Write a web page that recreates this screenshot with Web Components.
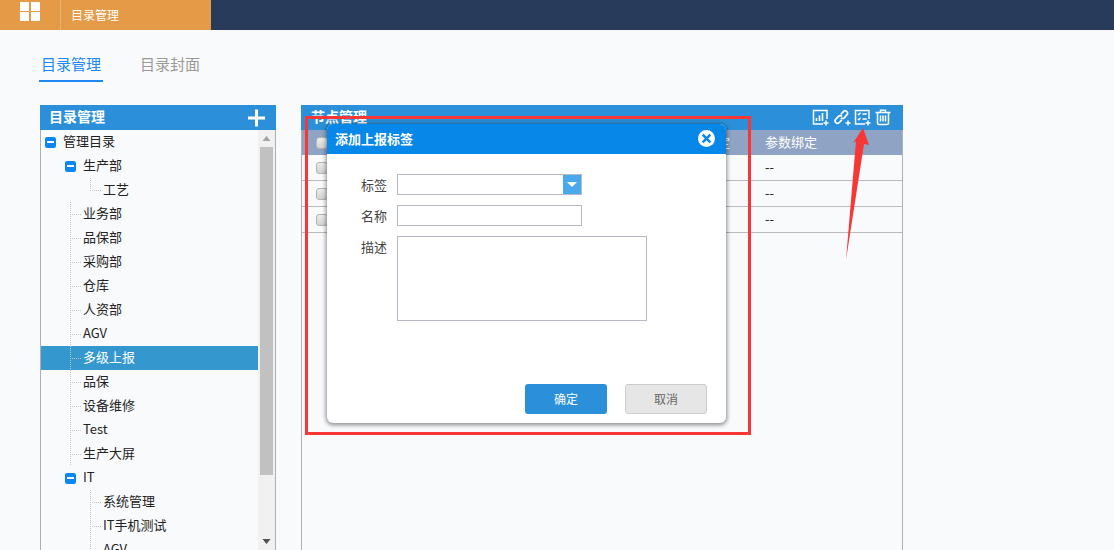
<!DOCTYPE html>
<html lang="zh">
<head>
<meta charset="utf-8">
<title>目录管理</title>
<style>
    html, body {
        margin: 0;
        height: 550px;
        overflow: hidden;
        background: #f9fafc;
        font: 13px "Noto Sans CJK SC", "Noto Sans", sans-serif;
        color: #222;
    }
    .workspace {
        display: flex;
        gap: 25px;
        margin: 23px 0 0 40px;
    }
</style>
</head>
<body>
<app-topbar>目录管理</app-topbar>
<tab-bar>
    <tab-item active>目录管理</tab-item>
    <tab-item>目录封面</tab-item>
</tab-bar>
<div class="workspace">
    <tree-panel>
        <tree-node level="0" toggle>管理目录</tree-node>
        <tree-node level="1" toggle>生产部</tree-node>
        <tree-node level="2" last>工艺</tree-node>
        <tree-node level="1">业务部</tree-node>
        <tree-node level="1">品保部</tree-node>
        <tree-node level="1">采购部</tree-node>
        <tree-node level="1">仓库</tree-node>
        <tree-node level="1">人资部</tree-node>
        <tree-node level="1">AGV</tree-node>
        <tree-node level="1" selected>多级上报</tree-node>
        <tree-node level="1">品保</tree-node>
        <tree-node level="1">设备维修</tree-node>
        <tree-node level="1">Test</tree-node>
        <tree-node level="1">生产大屏</tree-node>
        <tree-node level="1" toggle>IT</tree-node>
        <tree-node level="2">系统管理</tree-node>
        <tree-node level="2">IT手机测试</tree-node>
        <tree-node level="2">AGV</tree-node>
    </tree-panel>
    <node-panel></node-panel>
</div>
<tag-dialog></tag-dialog>
<red-markup></red-markup>

<script>
class AppTopbar extends HTMLElement {
    connectedCallback() {
        this.attachShadow({ mode: 'open' });
        this.shadowRoot.innerHTML = `
            <style>
                :host {
                    display: block;
                    height: 30px;
                    background: #283b5b;
                }
                .brand {
                    display: flex;
                    width: 211px;
                    height: 30px;
                    background: #e59a48;
                    color: #fff;
                    font-size: 12px;
                    line-height: 30px;
                }
                .logo-cell {
                    box-sizing: border-box;
                    width: 61px;
                    padding: 2px 0 0 20px;
                    border-right: 1px solid #eaae6e;
                }
                .logo {
                    display: grid;
                    grid-template-columns: 9px 9px;
                    grid-auto-rows: 9px;
                    gap: 1px 2px;
                }
                .logo i {
                    background: #fff;
                }
                .title {
                    padding-left: 10px;
                }
            </style>
            <div class="brand">
                <div class="logo-cell"><div class="logo"><i></i><i></i><i></i><i></i></div></div>
                <div class="title"><slot></slot></div>
            </div>
        `;
    }
}

class TabBar extends HTMLElement {
    connectedCallback() {
        this.attachShadow({ mode: 'open' });
        this.shadowRoot.innerHTML = `
            <style>
                :host {
                    display: flex;
                    gap: 35px;
                    height: 28px;
                    padding: 24px 0 0 39px;
                }
            </style>
            <slot></slot>
        `;
    }
}

class TabItem extends HTMLElement {
    connectedCallback() {
        this.attachShadow({ mode: 'open' });
        this.shadowRoot.innerHTML = `
            <style>
                :host {
                    display: block;
                    box-sizing: border-box;
                    height: 28px;
                    padding: 0 2px;
                    font-size: 15px;
                    line-height: 19px;
                    color: #999;
                }
                :host([active]) {
                    color: #1e88f5;
                    border-bottom: 2px solid #1e88f5;
                }
            </style>
            <slot></slot>
        `;
    }
}

class TreePanel extends HTMLElement {
    connectedCallback() {
        this.attachShadow({ mode: 'open' });
        this.shadowRoot.innerHTML = `
            <style>
                :host {
                    display: flex;
                    flex-direction: column;
                    width: 236px;
                    height: 445px;
                }
                .head {
                    display: flex;
                    justify-content: space-between;
                    align-items: center;
                    height: 25px;
                    padding: 0 10px 0 9px;
                    background: #2b90d9;
                    color: #fff;
                    font-size: 14px;
                    font-weight: 700;
                }
                .head span {
                    margin-top: -4px;
                }
                .body {
                    flex: 1;
                    display: flex;
                    min-height: 0;
                    border-left: 1px solid #aab0b6;
                    border-right: 1px solid #aab0b6;
                }
                .list {
                    flex: 1;
                    overflow: hidden;
                }
                svg {
                    display: block;
                }
            </style>
            <div class="head">
                <span>目录管理</span>
                <svg width="18" height="18" viewBox="0 0 18 18"><path d="M0 9h17M8.500 0.500v17" stroke="#fff" stroke-width="3"/></svg>
            </div>
            <div class="body">
                <div class="list"><slot></slot></div>
                <fake-scrollbar></fake-scrollbar>
            </div>
        `;
    }
}

class TreeNode extends HTMLElement {
    connectedCallback() {
        const level = Number(this.getAttribute('level'));
        const toggle = this.hasAttribute('toggle');
        const dots = '#c4c4c4';
        // 连接线: 竖线 + 横线都用背景画
        const guideBg = this.hasAttribute('last')
            ? `repeating-linear-gradient(to right, ${dots} 0 1px, transparent 1px 2px) 0 12px / 100% 1px no-repeat,
               repeating-linear-gradient(to bottom, ${dots} 0 1px, transparent 1px 2px) 0 0 / 1px 12px no-repeat`
            : `repeating-linear-gradient(to right, ${dots} 0 1px, transparent 1px 2px) 0 12px / 100% 1px no-repeat,
               repeating-linear-gradient(to bottom, ${dots} 0 1px, transparent 1px 2px) 0 0 / 1px 100% no-repeat`;
        this.attachShadow({ mode: 'open' });
        this.shadowRoot.innerHTML = `
            <style>
                :host {
                    display: flex;
                    align-items: center;
                    height: 24px;
                    padding-left: ${4 + level * 20}px;
                    color: #222;
                    font-size: 13px;
                    white-space: nowrap;
                }
                :host([selected]) {
                    background: #3498cf;
                    color: #fff;
                }
                .toggle {
                    display: flex;
                    align-items: center;
                    justify-content: center;
                    width: 11px;
                    height: 11px;
                    margin-right: 7px;
                    border-radius: 2px;
                    background: #0a87f5;
                }
                .toggle i {
                    width: 7px;
                    height: 1.500px;
                    background: #fff;
                }
                .guide {
                    width: 12px;
                    height: 24px;
                    margin: 0 1px 0 5px;
                    background: ${guideBg};
                }
                .label {
                    margin-top: -3px;
                }
            </style>
            ${toggle ? '<span class="toggle"><i></i></span>' : '<span class="guide"></span>'}
            <span class="label"><slot></slot></span>
        `;
    }
}

class FakeScrollbar extends HTMLElement {
    connectedCallback() {
        this.attachShadow({ mode: 'open' });
        this.shadowRoot.innerHTML = `
            <style>
                :host {
                    display: flex;
                    flex-direction: column;
                    width: 17px;
                    background: #f1f1f1;
                }
                .btn {
                    display: flex;
                    align-items: center;
                    justify-content: center;
                    height: 17px;
                }
                .thumb {
                    height: 328px;
                    margin: 0 2px;
                    background: #c1c1c1;
                }
                .gap {
                    flex: 1;
                }
            </style>
            <div class="btn"><svg width="9" height="5"><path d="M4.500 0L8.500 5H0.500z" fill="#a3a3a3"/></svg></div>
            <div class="thumb"></div>
            <div class="gap"></div>
            <div class="btn"><svg width="9" height="5"><path d="M0.500 0H8.500L4.500 5z" fill="#505050"/></svg></div>
        `;
    }
}

class NodePanel extends HTMLElement {
    connectedCallback() {
        const row = `<div class="row"><span class="check"></span><span class="mid"></span><span class="last">--</span></div>`;
        this.attachShadow({ mode: 'open' });
        this.shadowRoot.innerHTML = `
            <style>
                :host {
                    display: flex;
                    flex-direction: column;
                    width: 602px;
                    height: 445px;
                }
                .head {
                    display: flex;
                    justify-content: space-between;
                    align-items: center;
                    height: 25px;
                    padding: 0 12px 0 10px;
                    background: #2b90d9;
                    color: #fff;
                    font-size: 14px;
                    font-weight: 700;
                }
                .head > span {
                    margin-top: -4px;
                }
                .tools {
                    display: flex;
                }
                .tools svg + svg {
                    margin-left: 5px;
                }
                .tools svg.list {
                    margin-left: 3px;
                }
                .tools svg.bin {
                    margin-left: 4px;
                }
                svg {
                    display: block;
                }
                .table {
                    flex: 1;
                    border-left: 1px solid #aab0b6;
                    border-right: 1px solid #aab0b6;
                }
                .row {
                    display: flex;
                    align-items: center;
                    height: 25px;
                    border-bottom: 1px solid #bbb;
                    font-size: 13px;
                }
                .row.top {
                    height: 25px;
                    border-bottom: 0;
                    background: #8fa3c4;
                    color: #fff;
                }
                .check {
                    box-sizing: border-box;
                    width: 12px;
                    height: 12px;
                    margin-left: 14px;
                    border: 1px solid #b4b4b4;
                    border-radius: 3px;
                    background: linear-gradient(#ececec, #d2d2d2);
                }
                .mid {
                    flex: 1;
                    padding-right: 35px;
                    margin-top: -2px;
                    text-align: right;
                }
                .last {
                    width: 137px;
                    margin-top: -2px;
                }
            </style>
            <div class="head">
                <span>节点管理</span>
                <div class="tools">
                    <svg width="17" height="17" viewBox="0 0 17 17" fill="none" stroke="#fff" stroke-width="1.500">
                        <path d="M11 15H1.500V1.500H15V10"/>
                        <path d="M4.500 12V9M7.500 12V6.500M10.500 12V4" stroke-width="1.600"/>
                        <path d="M11.500 14h5M14 11.500v5" stroke-width="1.500"/>
                    </svg>
                    <svg width="17" height="17" viewBox="0 0 17 17" fill="none" stroke="#fff" stroke-width="1.700">
                        <path d="M6.800 5.300L9.300 2.600a2.400 2.400 0 0 1 3.500 3.300L10.200 8.800a2.400 2.400 0 0 1-3.400 0"/>
                        <path d="M7.800 10.800L5.300 13.500a2.400 2.400 0 0 1-3.500-3.300L4.500 7.300a2.400 2.400 0 0 1 3.400 0"/>
                        <path d="M11.500 14h5M14 11.500v5" stroke-width="1.500"/>
                    </svg>
                    <svg class="list" width="17" height="17" viewBox="0 0 17 17" fill="none" stroke="#fff" stroke-width="1.500">
                        <path d="M11 15H1.500V1.500H15V10"/>
                        <path d="M3.800 4.800l1 1 1.800-2M8.500 5H12.800M3.800 9.800l1 1 1.800-2M8.500 10H12.800" stroke-width="1.300"/>
                        <path d="M11.500 14h5M14 11.500v5" stroke-width="1.500"/>
                    </svg>
                    <svg class="bin" width="16" height="17" viewBox="0 0 16 17" fill="none" stroke="#fff" stroke-width="1.500">
                        <path d="M0.500 3.500H15.500M5.500 3.300V1.200H10.500V3.300"/>
                        <path d="M2.500 3.500V14a1.500 1.500 0 0 0 1.500 1.500H12a1.500 1.500 0 0 0 1.500-1.500V3.500"/>
                        <path d="M5.500 6.500V12.500M8 6.500V12.500M10.500 6.500V12.500"/>
                    </svg>
                </div>
            </div>
            <div class="table">
                <div class="row top"><span class="check"></span><span class="mid">标签绑定</span><span class="last">参数绑定</span></div>
                ${row}${row}${row}
            </div>
        `;
    }
}

class TagDialog extends HTMLElement {
    connectedCallback() {
        this.attachShadow({ mode: 'open' });
        this.shadowRoot.innerHTML = `
            <style>
                :host {
                    position: absolute;
                    left: 327px;
                    top: 124px;
                    box-sizing: border-box;
                    width: 399px;
                    height: 299px;
                    border-radius: 6px;
                    background: #fff;
                    box-shadow: 0 1px 4px 1px rgba(0, 0, 0, .45);
                    overflow: hidden;
                }
                .head {
                    display: flex;
                    justify-content: space-between;
                    align-items: center;
                    height: 30px;
                    padding: 0 11px 0 8px;
                    background: #0787e8;
                    color: #fff;
                    font-size: 13px;
                    font-weight: 700;
                }
                .head span {
                    margin-top: -2px;
                }
                svg {
                    display: block;
                }
                .head svg {
                    margin-top: -1px;
                }
                form {
                    display: grid;
                    grid-template-columns: 36px 1fr;
                    row-gap: 10px;
                    margin: 0;
                    padding: 20px 0 0 34px;
                }
                label {
                    font-size: 13px;
                    line-height: 21px;
                    color: #444;
                }
                .select, input, textarea {
                    box-sizing: border-box;
                    display: block;
                    margin: 0;
                    padding: 0;
                    border: 1px solid #b8b8c8;
                    border-radius: 0;
                    background: #fff;
                    outline: 0;
                }
                .select {
                    display: flex;
                    justify-content: flex-end;
                    width: 185px;
                    height: 21px;
                }
                .arrow {
                    display: flex;
                    align-items: center;
                    justify-content: center;
                    width: 18px;
                    background: #4aa8ec;
                }
                input {
                    width: 185px;
                    height: 21px;
                }
                textarea {
                    width: 250px;
                    height: 85px;
                    resize: none;
                }
                .foot {
                    display: flex;
                    justify-content: flex-end;
                    gap: 18px;
                    margin-top: 63px;
                    padding-right: 19px;
                }
                .btn {
                    box-sizing: border-box;
                    width: 82px;
                    height: 30px;
                    border-radius: 3px;
                    font-size: 12px;
                    line-height: 30px;
                    text-align: center;
                }
                .ok {
                    background: #2b90d9;
                    color: #fff;
                }
                .cancel {
                    border: 1px solid #ccc;
                    background: #e6e6e6;
                    color: #666;
                    line-height: 28px;
                }
            </style>
            <div class="head">
                <span>添加上报标签</span>
                <svg width="17" height="17" viewBox="0 0 17 17">
                    <circle cx="8.500" cy="8.500" r="8.500" fill="#fff"/>
                    <path d="M4.700 4.700L12.300 12.300M12.300 4.700L4.700 12.300" stroke="#0787e8" stroke-width="2.400"/>
                </svg>
            </div>
            <form>
                <label>标签</label>
                <div class="select"><span class="arrow"><svg width="10" height="5"><path d="M0 0H10L5 5z" fill="#fff"/></svg></span></div>
                <label>名称</label>
                <input type="text">
                <label>描述</label>
                <textarea></textarea>
            </form>
            <div class="foot">
                <div class="btn ok">确定</div>
                <div class="btn cancel">取消</div>
            </div>
        `;
    }
}

class RedMarkup extends HTMLElement {
    connectedCallback() {
        this.attachShadow({ mode: 'open' });
        this.shadowRoot.innerHTML = `
            <style>
                :host {
                    position: absolute;
                    left: 0;
                    top: 0;
                    width: 1114px;
                    height: 550px;
                    pointer-events: none;
                }
                svg {
                    display: block;
                }
            </style>
            <svg width="1114" height="550" viewBox="0 0 1114 550">
                <rect x="306.500" y="117.500" width="443" height="316" fill="none" stroke="#f73636" stroke-width="3"/>
                <path d="M863 128L869 145L864 144L846 260L856 141L853 143z" fill="#f73636"/>
            </svg>
        `;
    }
}

customElements.define('app-topbar', AppTopbar);
customElements.define('tab-bar', TabBar);
customElements.define('tab-item', TabItem);
customElements.define('tree-panel', TreePanel);
customElements.define('tree-node', TreeNode);
customElements.define('fake-scrollbar', FakeScrollbar);
customElements.define('node-panel', NodePanel);
customElements.define('tag-dialog', TagDialog);
customElements.define('red-markup', RedMarkup);
</script>
</body>
</html>
